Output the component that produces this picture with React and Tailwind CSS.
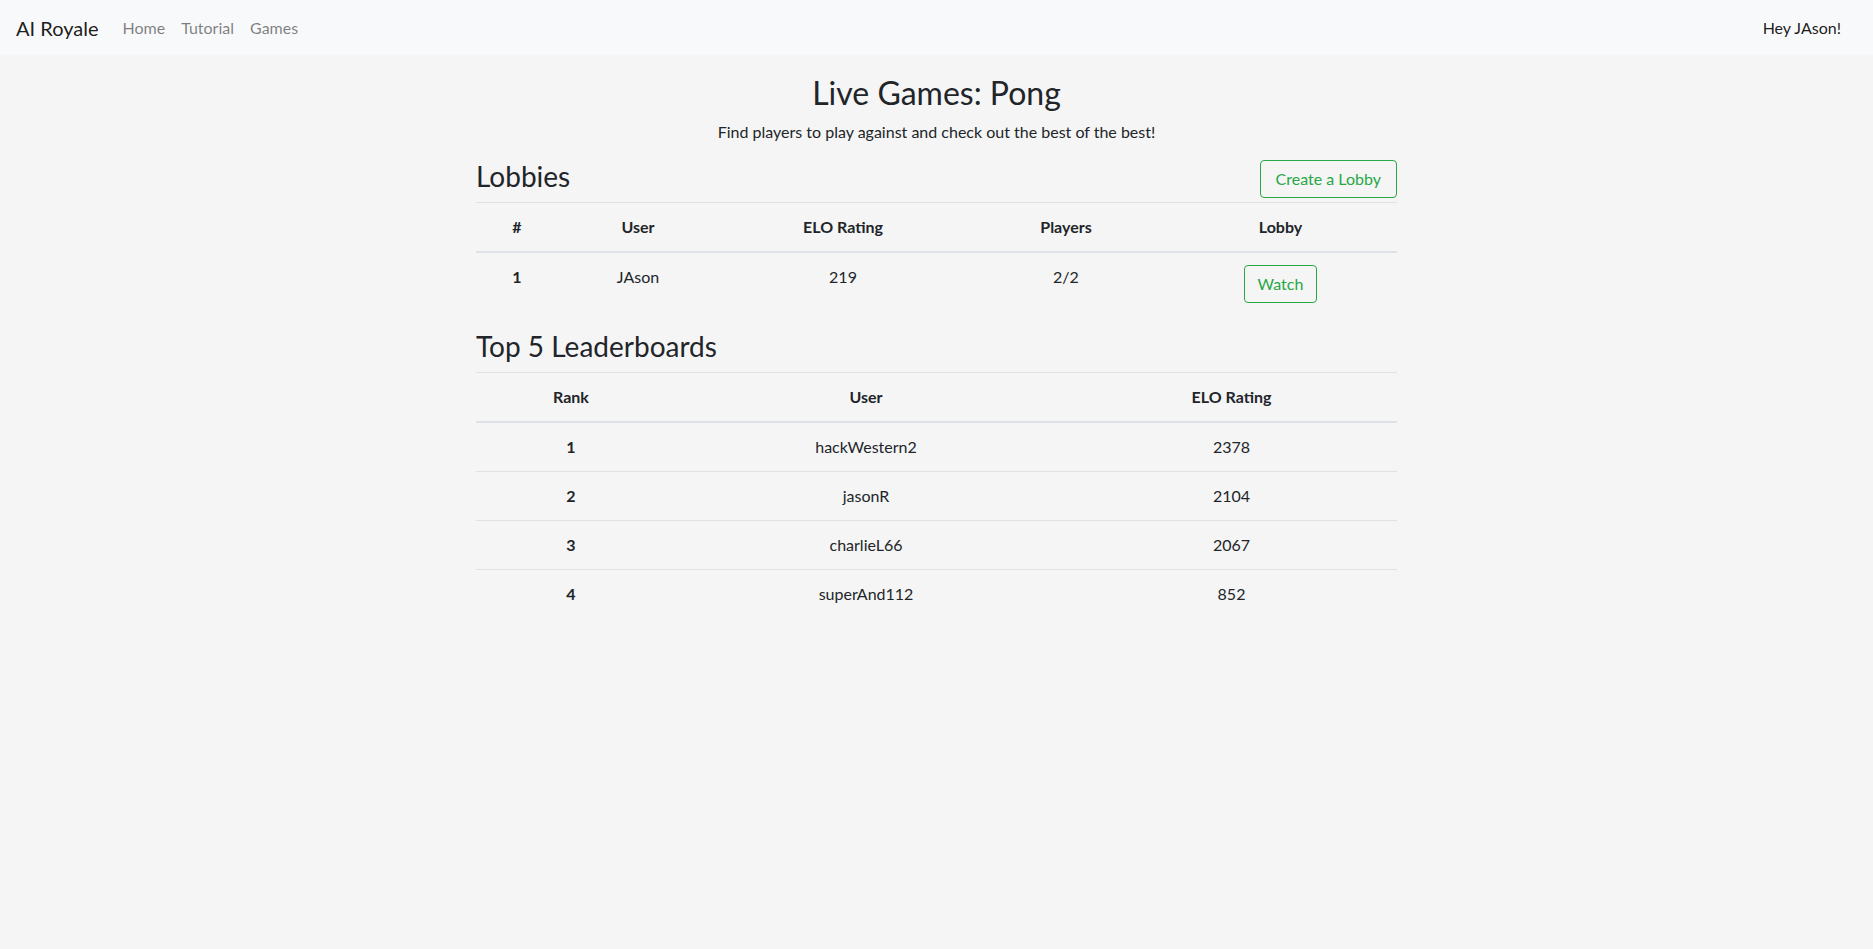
const lobbies = [{ id: 1, user: "JAson", elo: 219, players: "2/2" }];

const leaders = [
  { rank: 1, user: "hackWestern2", elo: 2378 },
  { rank: 2, user: "jasonR", elo: 2104 },
  { rank: 3, user: "charlieL66", elo: 2067 },
  { rank: 4, user: "superAnd112", elo: 852 },
];

const th = "px-3 py-3 font-bold text-center align-bottom border-t border-b-2 border-[#dee2e6]";
const td = "px-3 py-3 text-center align-top border-t border-[#dee2e6]";

const App = () => {
  return (
    <div
      className="min-h-screen bg-[#f5f5f5] text-[#212529] text-base leading-6"
      style={{ fontFamily: "Lato, 'Noto Sans', sans-serif" }}
    >
      <nav className="flex items-center justify-between bg-[#f8f9fa] pl-4 pr-8 h-[55px]">
        <div className="flex items-center">
          <a className="text-[20px] leading-[30px] mr-4 text-black/90">AI Royale</a>
          <ul className="flex">
            <li className="px-2 text-black/50">Home</li>
            <li className="px-2 text-black/50">Tutorial</li>
            <li className="px-2 text-black/50">Games</li>
          </ul>
        </div>
        <div className="text-black/90">Hey JAson!</div>
      </nav>

      <main className="w-[921px] mx-auto pt-[19px]">
        <h2 className="text-center text-[32px] leading-[1.2] mb-2">Live Games: Pong</h2>
        <p className="text-center mb-4">
          Find players to play against and check out the best of the best!
        </p>

        <div className="flex justify-between items-start">
          <h3 className="text-[28px] leading-[1.2] mb-2">Lobbies</h3>
          <button className="px-[15px] py-[6px] border border-[#28a745] text-[#28a745] rounded">
            Create a Lobby
          </button>
        </div>
        <table className="w-full mb-[15px] table-fixed">
          <thead>
            <tr>
              <th className={`${th} w-[82px]`}>#</th>
              <th className={`${th} w-[160px]`}>User</th>
              <th className={`${th} w-[250px]`}>ELO Rating</th>
              <th className={`${th} w-[196px]`}>Players</th>
              <th className={th}>Lobby</th>
            </tr>
          </thead>
          <tbody>
            {lobbies.map((l) => (
              <tr key={l.id}>
                <th scope="row" className={`${td} font-bold`}>{l.id}</th>
                <td className={td}>{l.user}</td>
                <td className={td}>{l.elo}</td>
                <td className={td}>{l.players}</td>
                <td className={td}>
                  <button className="px-[13px] py-[6px] border border-[#28a745] text-[#28a745] rounded">
                    Watch
                  </button>
                </td>
              </tr>
            ))}
          </tbody>
        </table>

        <h3 className="text-[28px] leading-[1.2] mb-2">Top 5 Leaderboards</h3>
        <table className="w-full mb-4 table-fixed">
          <thead>
            <tr>
              <th className={`${th} w-[190px]`}>Rank</th>
              <th className={`${th} w-[400px]`}>User</th>
              <th className={th}>ELO Rating</th>
            </tr>
          </thead>
          <tbody>
            {leaders.map((l) => (
              <tr key={l.rank}>
                <th scope="row" className={`${td} font-bold`}>{l.rank}</th>
                <td className={td}>{l.user}</td>
                <td className={td}>{l.elo}</td>
              </tr>
            ))}
          </tbody>
        </table>
      </main>
    </div>
  );
};

export default App;
